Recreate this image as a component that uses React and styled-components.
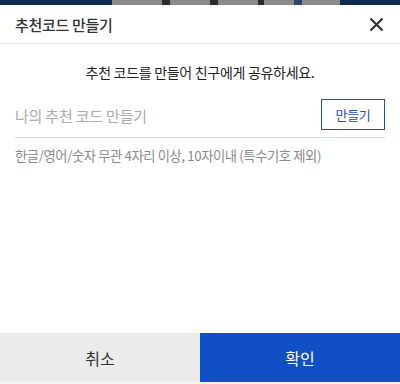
import React from "react";
import styled, { createGlobalStyle } from "styled-components";

const Global = createGlobalStyle`
  html, body { margin: 0; padding: 0; background: #fff; }
  body { font-family: "Noto Sans CJK KR", "Noto Sans", sans-serif; }
  * { box-sizing: border-box; }
`;

const Page = styled.div`
  width: 400px;
  height: 384px;
  display: flex;
  flex-direction: column;
  overflow: hidden;
  background: #fff;
`;

const Backdrop = styled.div`
  height: 5px;
  flex: none;
  display: flex;
  background: #0d2a4c;
`;

const BackdropPart = styled.div`
  width: ${(p) => p.w}px;
  background: ${(p) => p.c};
`;

const Header = styled.div`
  height: 39px;
  flex: none;
  display: flex;
  align-items: center;
  justify-content: space-between;
  padding: 0 16px 0 15px;
  border-bottom: 1px solid #e6e6e6;
`;

const Title = styled.h1`
  margin: 0;
  font-size: 15px;
  font-weight: 500;
  color: #333;
  letter-spacing: -0.3px;
`;

const Close = styled.button`
  border: 0;
  background: none;
  padding: 0;
  width: 16px;
  height: 16px;
  display: flex;
  align-items: center;
  justify-content: center;
  cursor: pointer;
`;

const Body = styled.div`
  flex: 1;
  padding: 18px 15px 0;
  display: flex;
  flex-direction: column;
`;

const Lead = styled.p`
  margin: 0;
  text-align: center;
  font-size: 14px;
  color: #222;
  letter-spacing: -0.3px;
  line-height: 20px;
`;

const InputRow = styled.div`
  margin-top: 14px;
  height: 42px;
  display: flex;
  align-items: center;
  justify-content: space-between;
  border-bottom: 1px solid #d2dae5;
  padding-bottom: 3px;
`;

const Input = styled.input`
  border: 0;
  outline: none;
  flex: 1;
  font-family: inherit;
  font-size: 15px;
  color: #333;
  padding: 0;
  letter-spacing: -0.2px;
  &::placeholder { color: #aaa; }
`;

const MakeButton = styled.button`
  width: 64px;
  height: 31px;
  border: 1px solid #1a4fbf;
  background: #fff;
  color: #1a4fbf;
  font-family: inherit;
  font-size: 13px;
  padding: 0;
  margin-top: -1px;
  letter-spacing: -0.3px;
`;

const Help = styled.p`
  margin: 9px 0 0;
  font-size: 13.3px;
  color: #8a8a8a;
  letter-spacing: -0.4px;
  line-height: 18px;
`;

const Footer = styled.div`
  height: 51px;
  flex: none;
  display: flex;
  padding-bottom: 2px;
  background: #f4f4f4;
`;

const FooterButton = styled.button`
  flex: 1;
  border: 0;
  font-family: inherit;
  font-size: 16px;
  padding: 0;
  background: ${(p) => (p.primary ? "#1150c4" : "#ebebeb")};
  color: ${(p) => (p.primary ? "#fff" : "#333")};
`;

export default function App() {
  return (
    <>
      <Global />
      <Page>
        <Backdrop>
          <BackdropPart w={112} c="#0d2a4c" />
          <BackdropPart w={50} c="#8a8a8a" />
          <BackdropPart w={8} c="#2b2b2b" />
          <BackdropPart w={40} c="#8a8a8a" />
          <BackdropPart w={8} c="#2b2b2b" />
          <BackdropPart w={40} c="#8a8a8a" />
          <BackdropPart w={6} c="#2b2b2b" />
          <BackdropPart w={30} c="#8a8a8a" />
          <BackdropPart w={8} c="#2a4868" />
          <BackdropPart w={38} c="#8a8a8a" />
          <BackdropPart w={60} c="#0d2a4c" />
        </Backdrop>
        <Header>
          <Title>추천코드 만들기</Title>
          <Close aria-label="닫기">
            <svg width="15" height="15" viewBox="0 0 15 15">
              <path d="M1.5 1.5 L13.5 13.5 M13.5 1.5 L1.5 13.5" stroke="#333" strokeWidth="2.2" strokeLinecap="butt" />
            </svg>
          </Close>
        </Header>
        <Body>
          <Lead>추천 코드를 만들어 친구에게 공유하세요.</Lead>
          <InputRow>
            <Input placeholder="나의 추천 코드 만들기" />
            <MakeButton>만들기</MakeButton>
          </InputRow>
          <Help>한글/영어/숫자 무관 4자리 이상, 10자이내 (특수기호 제외)</Help>
        </Body>
        <Footer>
          <FooterButton>취소</FooterButton>
          <FooterButton primary>확인</FooterButton>
        </Footer>
      </Page>
    </>
  );
}
